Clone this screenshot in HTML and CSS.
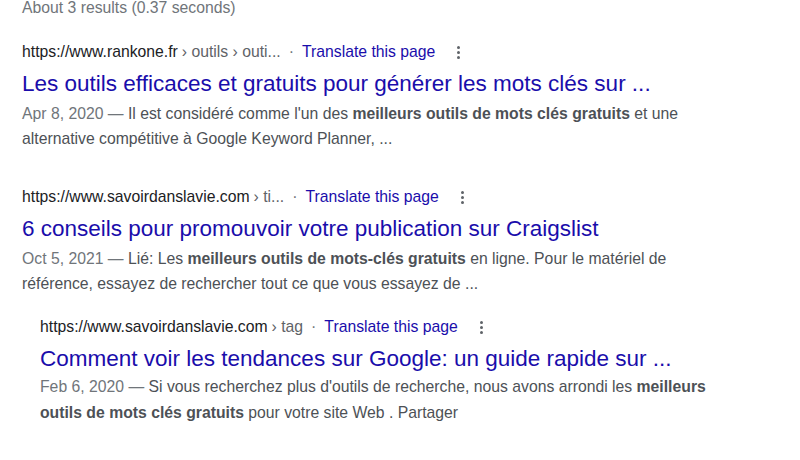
FILE: index.html
```html
<!DOCTYPE html>
<html lang="fr">
<head>
    <meta charset="UTF-8">
    <title>Résultats</title>
    <link rel="stylesheet" href="styles.css">
</head>
<body>

<div class="stats">About 3 results (0.37 seconds)</div>

<!-- Résultat 1 -->
<div class="result r1">
    <div class="url-line">
        <span class="url">https://www.rankone.fr</span>
        <span class="crumb">› outils › outi...</span>
        <span class="sep">·</span>
        <a class="translate" href="#">Translate this page</a>
        <span class="more"><i></i><i></i><i></i></span>
    </div>
    <h3 class="title"><a href="#">Les outils efficaces et gratuits pour générer les mots clés sur ...</a></h3>
    <p class="snippet"><span class="date">Apr 8, 2020 —</span> Il est considéré comme l'un des <b>meilleurs outils de mots clés gratuits</b> et une alternative compétitive à Google Keyword Planner, ...</p>
</div>

<!-- Résultat 2 -->
<div class="result r2">
    <div class="url-line">
        <span class="url">https://www.savoirdanslavie.com</span>
        <span class="crumb">› ti...</span>
        <span class="sep">·</span>
        <a class="translate" href="#">Translate this page</a>
        <span class="more"><i></i><i></i><i></i></span>
    </div>
    <h3 class="title"><a href="#">6 conseils pour promouvoir votre publication sur Craigslist</a></h3>
    <p class="snippet"><span class="date">Oct 5, 2021 —</span> Lié: Les <b>meilleurs outils de mots-clés gratuits</b> en ligne. Pour le matériel de référence, essayez de rechercher tout ce que vous essayez de ...</p>
</div>

<!-- Résultat 3 -->
<div class="result r3">
    <div class="url-line">
        <span class="url">https://www.savoirdanslavie.com</span>
        <span class="crumb">› tag</span>
        <span class="sep">·</span>
        <a class="translate" href="#">Translate this page</a>
        <span class="more"><i></i><i></i><i></i></span>
    </div>
    <h3 class="title"><a href="#">Comment voir les tendances sur Google: un guide rapide sur ...</a></h3>
    <p class="snippet"><span class="date">Feb 6, 2020 —</span> Si vous recherchez plus d'outils de recherche, nous avons arrondi les <b>meilleurs outils de mots clés gratuits</b> pour votre site Web . Partager</p>
</div>

</body>
</html>
```
FILE: styles.css
```css
body {
    font-family: "Liberation Sans", Arial, sans-serif;
    margin: 0;
    padding: 0 0 0 22px;
    background: #fff;
    color: #4d5156;
}
.stats {
    color: #70757a;
    font-size: 15.75px;
    line-height: 16px;
}
.result {
    width: 690px;
}
.r1 {
    margin-top: 26px;
}
.r2 {
    margin-top: 36px;
}
.r3 {
    margin-top: 21px;
    margin-left: 18px;
}
.url-line {
    display: flex;
    align-items: center;
    font-size: 15.75px;
    line-height: 20px;
    white-space: nowrap;
}
.url {
    color: #202124;
}
.crumb {
    color: #5f6368;
    margin-left: 4px;
}
.sep {
    color: #70757a;
    margin: 0 8px;
}
.translate {
    color: #1a0dab;
    text-decoration: none;
}
.more {
    display: flex;
    flex-direction: column;
    gap: 2px;
    margin-left: 22px;
}
.more i {
    width: 3px;
    height: 3px;
    border-radius: 50%;
    background: #5f6368;
}
.title {
    margin: 0;
    padding-top: 9px;
    font-weight: normal;
    font-size: 22.5px;
    line-height: 26px;
}
.title a {
    color: #1a0dab;
    text-decoration: none;
}
.snippet {
    margin: 4px 0 0;
    font-size: 15.75px;
    line-height: 25px;
    color: #4d5156;
}
.r3 .snippet {
    margin-top: 2px;
    line-height: 26px;
}
.date {
    color: #70757a;
}
.snippet b {
    color: #4d5156;
}
```
